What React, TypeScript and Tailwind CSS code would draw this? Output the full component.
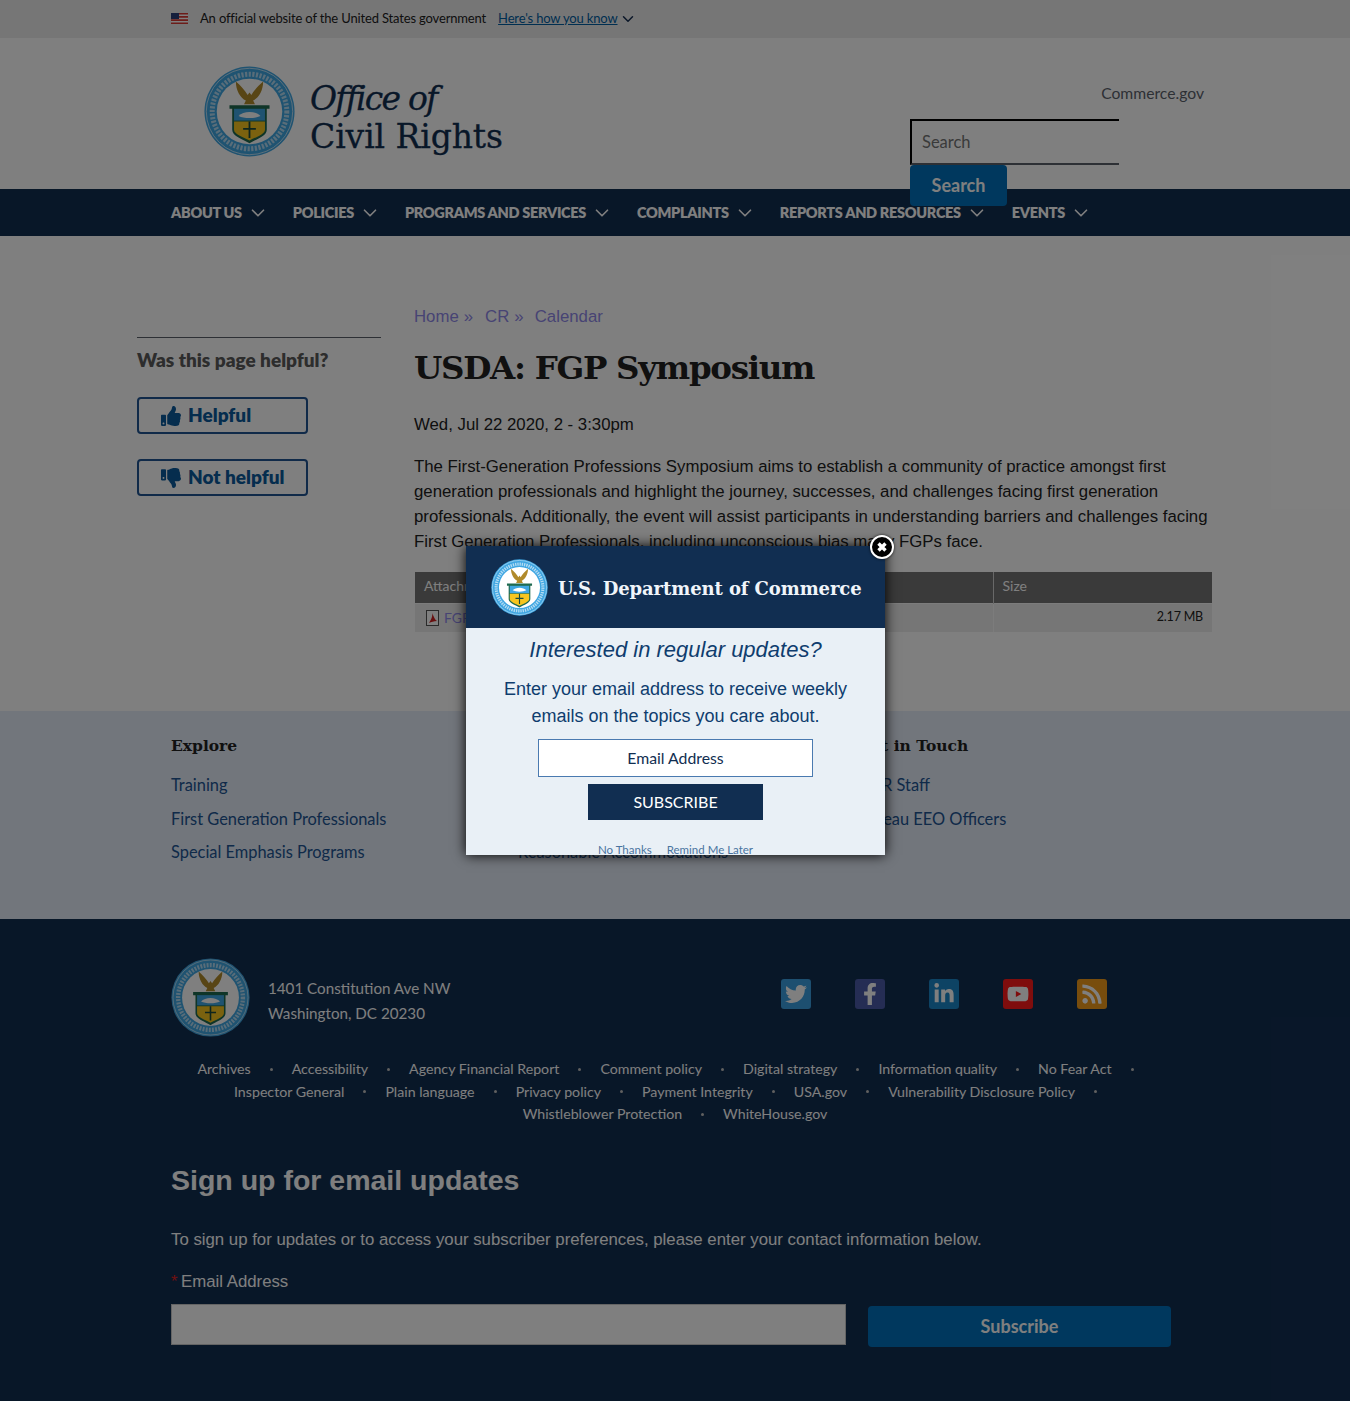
import React from 'react';
import { ChevronDown } from 'lucide-react';
import { FaThumbsUp, FaThumbsDown, FaTwitter, FaFacebookF, FaLinkedinIn, FaYoutube, FaRss } from 'react-icons/fa';

const navItems = ['About us', 'Policies', 'Programs and services', 'Complaints', 'Reports and resources', 'Events'];

const footerRows = [
  ['Archives', 'Accessibility', 'Agency Financial Report', 'Comment policy', 'Digital strategy', 'Information quality', 'No Fear Act'],
  ['Inspector General', 'Plain language', 'Privacy policy', 'Payment Integrity', 'USA.gov', 'Vulnerability Disclosure Policy'],
  ['Whistleblower Protection', 'WhiteHouse.gov'],
];

const socials = [
  { name: 'Twitter', Icon: FaTwitter, bg: 'bg-[#3a9fe0]' },
  { name: 'Facebook', Icon: FaFacebookF, bg: 'bg-[#4a5aa8]' },
  { name: 'LinkedIn', Icon: FaLinkedinIn, bg: 'bg-[#1a86c8]' },
  { name: 'YouTube', Icon: FaYoutube, bg: 'bg-[#ff1a1a]' },
  { name: 'RSS', Icon: FaRss, bg: 'bg-[#f09a1a]' },
];

const Seal = ({ className }: { className: string }) => (
  <svg viewBox="0 0 100 100" className={className}>
    <circle cx="50" cy="50" r="49.5" fill="#3fa6e2" />
    <circle cx="50" cy="50" r="47.5" fill="none" stroke="#ffffff" strokeWidth="0.7" />
    <circle cx="50" cy="50" r="41" fill="none" stroke="#ffffff" strokeWidth="5.5" strokeDasharray="2.4 1.6" opacity="0.6" />
    <circle cx="50" cy="50" r="36" fill="#ffffff" />
    {/* eagle */}
    <path d="M35 17 C40 21 45 27 48 32 L50 29 L52 32 C55 27 60 21 65 17 C65 27 60 35 54 38 L56 42 L44 42 L46 38 C40 35 35 27 35 17 Z" fill="#b08a2a" />
    {/* shield */}
    <path d="M28 43 H72 V47 H69 V70 C69 77 58 80 50 85 C42 80 31 77 31 70 V47 H28 Z" fill="#1f6a50" />
    <path d="M33 47 H67 V60 H33 Z" fill="#3fa6e2" />
    <path d="M33 61 H67 V70 C67 75 57 78 50 82 C43 78 33 75 33 70 Z" fill="#f7c51e" />
    <path d="M38 55 C43 49 57 49 62 55 C56 58 44 58 38 55 Z" fill="#ffffff" />
    <path d="M49 61 H51 V79 H49 Z M43 68 H57 V70 H43 Z" fill="#1d4a3a" />
  </svg>
);

export default function App() {
  return (
    <div className="relative w-[1350px] h-[1401px] overflow-hidden bg-white [font-family:Lato,sans-serif]">
      {/* gov banner */}
      <div className="flex items-center h-[38px] pl-[171px] pb-px bg-[#ededed] text-[13px] tracking-[-0.16px] text-[#212121]">
        <svg viewBox="0 0 17 11" className="w-[17px] h-[11px]">
          <rect width="17" height="11" fill="#ffffff" />
          <path d="M0 0H17V1.6H0ZM0 3.1H17V4.7H0ZM0 6.3H17V7.9H0ZM0 9.4H17V11H0Z" fill="#d83933" />
          <rect width="8" height="6" fill="#2a3f7a" />
        </svg>
        <span className="ml-[12px]">An official website of the United States government</span>
        <a className="ml-[12px] text-[#005ea2] underline">Here's how you know</a>
        <ChevronDown className="ml-px w-[18px] h-[18px] text-[#162e51]" strokeWidth={2} />
      </div>

      {/* header */}
      <header className="flex h-[151px]">
        <div className="flex ml-[204px] mt-[28px] h-[91px] gap-[15px] items-center">
          <Seal className="w-[91px] h-[91px]" />
          <div className="pt-[12px] text-[#112e51] [font-family:'DejaVu_Serif',serif] text-[33px] leading-[38px] [-webkit-text-stroke:0.3px_#112e51]">
            <div className="italic tracking-[-1.8px]">Office of</div>
            <div className="tracking-[-0.1px]">Civil Rights</div>
          </div>
        </div>
        <div className="ml-auto w-[440px]">
          <div className="mt-[44px] pr-[146px] text-right text-[15.7px] leading-[22px] text-[#5b616b]">Commerce.gov</div>
          <div className="mt-[15px] w-[209px] h-[46px] flex items-center pl-[10px] border-l-2 border-t-2 border-b-2 border-l-black border-t-black border-b-[#5b616b] text-[16.5px] text-[#757575]">Search</div>
          <button className="relative z-10 block w-[97px] h-[41px] rounded-[4px] bg-[#0071bc] text-white font-bold text-[18px]">Search</button>
        </div>
      </header>

      {/* main nav */}
      <nav className="flex items-center h-[47px] pl-[171px] gap-[24px] bg-[#112e51] text-white">
        {navItems.map((item) => (
          <div key={item} className="flex items-center gap-[5px] uppercase font-extrabold text-[14.5px] tracking-[-0.31px]">
            {item}
            <ChevronDown className="w-[22px] h-[22px]" strokeWidth={1.8} />
          </div>
        ))}
      </nav>

      {/* page body */}
      <section className="flex h-[475px] pl-[137px]">
        <aside className="w-[244px] pt-[101px]">
          <div className="border-t border-[#5b616b] pt-[9px]">
            <div className="text-[19px] font-extrabold text-[#5b5b5b] leading-[26px]">Was this page helpful?</div>
          </div>
          <button className="mt-[24px] flex items-center gap-[7px] pl-[22px] w-[171px] h-[37px] rounded-[4px] border-2 border-[#205493] text-[#0b5a9c] font-extrabold text-[19px]">
            <FaThumbsUp className="w-[20px] h-[20px]" />
            Helpful
          </button>
          <button className="mt-[25px] flex items-center gap-[7px] pl-[22px] w-[171px] h-[37px] rounded-[4px] border-2 border-[#205493] text-[#0b5a9c] font-extrabold text-[19px]">
            <FaThumbsDown className="w-[20px] h-[20px]" />
            Not helpful
          </button>
        </aside>

        <main className="ml-[33px] w-[798px] pt-[69px] [font-family:'Liberation_Sans',sans-serif] text-[16.8px] text-[#212121]">
          <div className="flex h-[24px] items-center text-[#8f88e8]">
            <a>Home</a>
            <span className="ml-[5px]">»</span>
            <a className="ml-[12px]">CR</a>
            <span className="ml-[5px]">»</span>
            <a className="ml-[11px]">Calendar</a>
          </div>
          <h1 className="mt-[14px] h-[50px] leading-[50px] [font-family:'DejaVu_Serif',serif] font-bold text-[32.5px] tracking-[-1.3px]">USDA: FGP Symposium</h1>
          <p className="mt-[19px] leading-[25px]">Wed, Jul 22 2020, 2 - 3:30pm</p>
          <p className="mt-[17px] leading-[25px]">
            The First-Generation Professions Symposium aims to establish a community of practice amongst first generation professionals and highlight the journey, successes, and challenges facing first generation professionals. Additionally, the event will assist participants in understanding barriers and challenges facing First Generation Professionals, including unconscious bias many FGPs face.
          </p>
          <table className="mt-[18px] ml-px w-[797px] border-collapse [font-family:Lato,sans-serif] text-[14px]">
            <thead>
              <tr className="h-[31px] bg-[#747474] text-white text-left">
                <th className="pl-[9px] pb-[3px] font-normal border-r border-[#d0d0d0]">Attachment</th>
                <th className="pl-[9px] pb-[3px] w-[219px] font-normal">Size</th>
              </tr>
            </thead>
            <tbody>
              <tr className="h-[29px] bg-[#ededed] border-t border-[#f8f8f8]">
                <td className="pl-[11px] border-r border-[#f8f8f8]">
                  <span className="flex items-center gap-[5px] text-[#8f88e8]">
                    <svg viewBox="0 0 13 16" className="w-[13px] h-[16px]">
                      <rect x="0.5" y="0.5" width="12" height="15" fill="#ffffff" stroke="#555555" />
                      <path d="M3 13 C5 10 7 6 6 3 C8 7 9 10 11 11 C8 11 5 12 3 13 Z" fill="#d02020" />
                    </svg>
                    FGP Symposium Flyer.pdf
                  </span>
                </td>
                <td className="pr-[9px] text-right text-[12.5px] tracking-[-0.2px]">2.17 MB</td>
              </tr>
            </tbody>
          </table>
        </main>
      </section>

      {/* link band */}
      <section className="flex h-[208px] pl-[171px] pt-[23px] bg-[#e4ecf8] text-[16.4px] text-[#205493]">
        <div className="w-[347px]">
          <h3 className="[font-family:'DejaVu_Serif',serif] font-bold text-[15.5px] leading-[24px] text-[#212121]">Explore</h3>
          <div className="mt-[16px] flex flex-col gap-[11px] leading-[22.5px]">
            <a>Training</a>
            <a>First Generation Professionals</a>
            <a>Special Emphasis Programs</a>
          </div>
        </div>
        <div className="w-[340px]">
          <h3 className="[font-family:'DejaVu_Serif',serif] font-bold text-[15.5px] leading-[24px] text-[#212121]">Resources</h3>
          <div className="mt-[16px] flex flex-col gap-[11px] leading-[22.5px]">
            <a>Complaints</a>
            <a>Policies</a>
            <a>Reasonable Accommodations</a>
          </div>
        </div>
        <div>
          <h3 className="[font-family:'DejaVu_Serif',serif] font-bold text-[15.5px] leading-[24px] text-[#212121]">Get in Touch</h3>
          <div className="mt-[16px] flex flex-col gap-[11px] leading-[22.5px]">
            <a>OCR Staff</a>
            <a>Bureau EEO Officers</a>
          </div>
        </div>
      </section>

      {/* dark footer */}
      <footer className="h-[482px] px-[171px] pt-[39px] bg-[#112e51] text-white">
        <div className="flex items-start">
          <Seal className="w-[79px] h-[79px]" />
          <div className="ml-[18px] mt-[18px] w-[200px] text-[15.2px] leading-[25px]">
            <div>1401 Constitution Ave NW</div>
            <div>Washington, DC 20230</div>
          </div>
          <div className="ml-[313px] mt-[21px] flex gap-[44px]">
            {socials.map(({ name, Icon, bg }) => (
              <a key={name} className={`flex items-center justify-center w-[30px] h-[30px] rounded-[3px] ${bg}`}>
                <Icon className="w-[22px] h-[22px] text-white" />
              </a>
            ))}
          </div>
        </div>

        <div className="mt-[21px] text-[14.2px] leading-[22.5px]">
          {footerRows.map((row, r) => (
            <div key={r} className="flex justify-center">
              {row.map((link, i) => (
                <span key={link} className="flex items-center">
                  <a>{link}</a>
                  {(r < 2 || i < row.length - 1) && (
                    <span className="flex justify-center w-[41px]">
                      <span className="w-[3px] h-[3px] rounded-full bg-[#c0c0c0]" />
                    </span>
                  )}
                </span>
              ))}
            </div>
          ))}
        </div>

        <div className="[font-family:'Liberation_Sans',sans-serif]">
          <h2 className="mt-[34px] text-[28.5px] leading-[40px] font-bold">Sign up for email updates</h2>
          <p className="mt-[27px] text-[16.8px] leading-[25px]">To sign up for updates or to access your subscriber preferences, please enter your contact information below.</p>
          <label className="block mt-[17px] text-[16.8px] leading-[25px]"><span className="inline-block w-[10px] text-[#e02020]">*</span>Email Address</label>
          <div className="mt-[10px] flex items-start">
            <div className="w-[675px] h-[41px] bg-white border border-[#c8c8c8]" />
            <button className="ml-[22px] mt-[2px] w-[303px] h-[41px] rounded-[4px] bg-[#0071bc] [font-family:Lato,sans-serif] font-bold text-[18px] text-white">Subscribe</button>
          </div>
        </div>
      </footer>

      {/* dim layer and popup */}
      <div className="absolute inset-0 z-20 bg-black/50" />
      <div className="absolute z-30 left-[466px] top-[546px] w-[419px] h-[309px] overflow-hidden bg-[#e9f0f6] shadow-[0_0_12px_rgba(0,0,0,1)]">
        <div className="flex items-center h-[82px] pl-[25px] bg-[#112e51]">
          <Seal className="w-[57px] h-[57px]" />
          <div className="ml-[10px] mt-[3px] [font-family:'DejaVu_Serif',serif] font-bold text-[18px] tracking-[-0.1px] text-[#f0f5fa]">U.S. Department of Commerce</div>
        </div>
        <div className="flex flex-col items-center text-[#0f3d6e] [font-family:'Liberation_Sans',sans-serif]">
          <div className="mt-[8px] text-[22px] leading-[27px] italic">Interested in regular updates?</div>
          <div className="mt-[13px] text-[18px] leading-[27px] text-center">Enter your email address to receive weekly<br />emails on the topics you care about.</div>
          <div className="mt-[9px] flex items-center justify-center w-[275px] h-[38px] bg-white border border-[#4a7ab0] [font-family:Lato,sans-serif] text-[15.8px] text-[#112e51]">Email Address</div>
          <button className="mt-[7px] w-[175px] h-[36px] bg-[#112e51] [font-family:Lato,sans-serif] text-[16px] text-white">SUBSCRIBE</button>
          <div className="mt-[21px] flex gap-[15px] [font-family:Lato,sans-serif] text-[11.5px] text-[#4a74a0]">
            <a>No Thanks</a>
            <a>Remind Me Later</a>
          </div>
        </div>
      </div>
      <button className="absolute z-30 left-[870px] top-[535px] flex items-center justify-center w-[24px] h-[24px] rounded-full bg-black border-2 border-white shadow-[0_0_3px_rgba(0,0,0,0.8)]">
        <svg viewBox="0 0 12 12" className="w-[12px] h-[12px]">
          <path d="M2.5 2.5 L9.5 9.5 M9.5 2.5 L2.5 9.5" stroke="#ffffff" strokeWidth="3.4" />
        </svg>
      </button>
    </div>
  );
}
